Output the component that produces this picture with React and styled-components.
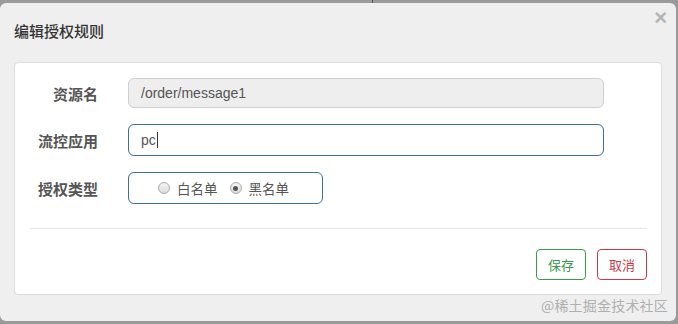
import React from 'react';
import styled, { createGlobalStyle } from 'styled-components';

const GlobalStyle = createGlobalStyle`
	html, body {
		margin: 0;
		padding: 0;
		background: #9a9a9a;
		font-family: 'Liberation Sans', 'Noto Sans CJK SC', sans-serif;
	}
`;

const Backdrop = styled.div`
	width: 678px;
	height: 324px;
	padding-top: 3px;
	box-sizing: border-box;
	position: relative;
	overflow: hidden;
`;

const Dialog = styled.div`
	width: 676px;
	height: 318px;
	background: #efefef;
	border-radius: 6px;
	box-sizing: border-box;
	display: flex;
	flex-direction: column;
	padding: 0 14px;
`;

const Header = styled.div`
	height: 59px;
	display: flex;
	align-items: center;
	justify-content: space-between;
	padding-bottom: 4px;
	box-sizing: border-box;
`;

const Title = styled.h4`
	margin: 0;
	font-family: 'Noto Sans CJK SC', sans-serif;
	font-size: 15px;
	font-weight: 500;
	color: #333;
`;

const Close = styled.span`
	font-size: 22px;
	font-weight: 700;
	color: #b5b5b5;
	line-height: 1;
	margin-top: -26px;
	margin-right: -5px;
	font-family: 'Liberation Sans', sans-serif;
`;

const Panel = styled.div`
	background: #fff;
	border: 1px solid #dcdcdc;
	border-radius: 4px;
	height: 233px;
	box-sizing: border-box;
	padding: 15px 14px 0 15px;
`;

const Form = styled.div`
	display: flex;
	flex-direction: column;
	gap: 16px;
	padding-bottom: 24px;
	border-bottom: 1px solid #e6e6e6;
`;

const Row = styled.div`
	display: flex;
	align-items: center;
`;

const Label = styled.label`
	width: 68px;
	text-align: right;
	padding-right: 30px;
	font-family: 'Noto Sans CJK SC', sans-serif;
	font-weight: 700;
	font-size: 15px;
	color: #555;
`;

const Input = styled.div`
	width: ${p => p.$w || 476}px;
	height: ${p => (p.$disabled ? 30 : 32)}px;
	box-sizing: border-box;
	border: 1px solid ${p => (p.$disabled ? '#cfcfcf' : '#3e6f9c')};
	background: ${p => (p.$disabled ? '#eeeeee' : '#fff')};
	border-radius: 6px;
	display: flex;
	align-items: center;
	justify-content: ${p => (p.$center ? 'center' : 'flex-start')};
	padding: 0 12px;
	font-size: 14px;
	color: #555;
`;

const Caret = styled.span`
	display: inline-block;
	width: 1px;
	height: 16px;
	background: #333;
	margin-left: 1px;
`;

const RadioGroup = styled.div`
	display: flex;
	align-items: center;
	gap: 12px;
	font-family: 'Noto Sans CJK SC', sans-serif;
	font-size: 13.5px;
	color: #555;
	padding-right: 4px;
`;

const RadioOption = styled.span`
	display: flex;
	align-items: center;
	gap: 7px;
`;

const RadioDot = styled.span`
	width: 12px;
	height: 12px;
	border-radius: 50%;
	border: 1px solid #a9a9a9;
	background: linear-gradient(#f4f4f4, #dcdcdc);
	box-sizing: border-box;
	display: flex;
	align-items: center;
	justify-content: center;
	&::after {
		content: '';
		width: 5px;
		height: 5px;
		border-radius: 50%;
		background: ${p => (p.$checked ? '#555' : 'transparent')};
	}
`;

const Footer = styled.div`
	display: flex;
	justify-content: flex-end;
	gap: 11px;
	padding-top: 20px;
	padding-right: 0;
`;

const Button = styled.button`
	width: 50px;
	height: 31px;
	border-radius: 4px;
	background: #fff;
	border: 1px solid ${p => p.$color};
	color: ${p => p.$color};
	font-family: 'Noto Sans CJK SC', sans-serif;
	font-size: 13px;
	padding: 0;
`;

const Watermark = styled.div`
	position: absolute;
	right: 10px;
	bottom: 9px;
	font-family: 'Noto Sans CJK SC', sans-serif;
	font-size: 14px;
	color: #b0b0b0;
	letter-spacing: 0.2px;
`;

const Edge = styled.div`
	position: absolute;
	left: 372px;
	top: 0;
	width: 1px;
	height: 3px;
	background: #555;
`;

export default function App() {
	return (
		<Backdrop>
			<GlobalStyle />
			<Edge />
			<Dialog>
				<Header>
					<Title>编辑授权规则</Title>
					<Close>×</Close>
				</Header>
				<Panel>
					<Form>
						<Row>
							<Label>资源名</Label>
							<Input $disabled>/order/message1</Input>
						</Row>
						<Row>
							<Label>流控应用</Label>
							<Input>
								pc
								<Caret />
							</Input>
						</Row>
						<Row>
							<Label>授权类型</Label>
							<Input $w={195} $center>
								<RadioGroup>
									<RadioOption>
										<RadioDot />
										白名单
									</RadioOption>
									<RadioOption>
										<RadioDot $checked />
										黑名单
									</RadioOption>
								</RadioGroup>
							</Input>
						</Row>
					</Form>
					<Footer>
						<Button $color="#3a9a4a">保存</Button>
						<Button $color="#c9394a">取消</Button>
					</Footer>
				</Panel>
			</Dialog>
			<Watermark>@稀土掘金技术社区</Watermark>
		</Backdrop>
	);
}
